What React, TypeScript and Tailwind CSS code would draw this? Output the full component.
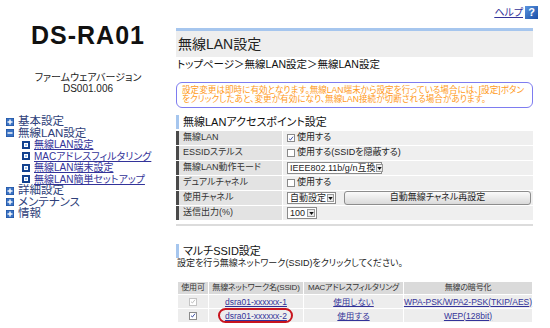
import * as React from 'react';

const ff = "[font-family:'Liberation_Sans','Noto_Sans_CJK_JP',sans-serif] [font-feature-settings:'palt']";

function cx(...c: (string | false | undefined)[]) {
  return c.filter(Boolean).join(' ');
}

function TreeIcon({ minus = false }: { minus?: boolean }) {
  return (
    <svg viewBox="0 0 8 8" className="h-[8px] w-[8px] shrink-0">
      <rect x="0" y="0" width="8" height="8" fill="#1d4f9c" />
      <rect x="0.5" y="0.5" width="7" height="7" fill="#3a72c4" />
      <rect x="1.5" y="3.3" width="5" height="1.4" fill="#fff" />
      {!minus && <rect x="3.3" y="1.5" width="1.4" height="5" fill="#fff" />}
    </svg>
  );
}

function PageIcon() {
  return (
    <svg viewBox="0 0 8 8" className="h-[8px] w-[8px] shrink-0">
      <rect x="0" y="0" width="8" height="8" fill="#12418e" />
      <rect x="2" y="2" width="4" height="4" fill="#fff" />
      <rect x="3" y="3" width="2" height="2" fill="#9cc2ee" />
    </svg>
  );
}

function Check({ on = false, dim = false }: { on?: boolean; dim?: boolean }) {
  return (
    <span
      className={cx(
        'inline-flex h-[8px] w-[8px] shrink-0 items-center justify-center border bg-white',
        dim ? 'border-[#c4c4c4]' : 'border-[#8a8a8a]'
      )}
    >
      {on && (
        <svg viewBox="0 0 8 8" className="h-[7px] w-[7px]">
          <path d="M1.3 4.2 L3.2 6 L6.7 1.6" fill="none" stroke={dim ? '#b8b8b8' : '#2a3f9a'} strokeWidth="1.2" />
        </svg>
      )}
    </span>
  );
}

function Select({ label, w }: { label: string; w: string }) {
  return (
    <span className={cx('inline-flex h-[12px] items-center justify-between border border-[#8c8c8c] bg-white pl-[2px]', w)}>
      <span className="whitespace-nowrap text-[9px] leading-[10px] text-[#222]">{label}</span>
      <span className="m-[1px] inline-flex h-[8px] w-[8px] items-center justify-center border border-[#9a9a9a] bg-[#ececec]">
        <svg viewBox="0 0 6 4" className="h-[3px] w-[5px]">
          <path d="M0 0 L6 0 L3 4 Z" fill="#111" />
        </svg>
      </span>
    </span>
  );
}

const rows: { label: string; value: React.ReactNode }[] = [
  {
    label: '無線LAN',
    value: (
      <span className="flex items-center gap-[2px]">
        <Check on />
        <span>使用する</span>
      </span>
    ),
  },
  {
    label: 'ESSIDステルス',
    value: (
      <span className="flex items-center gap-[2px]">
        <Check />
        <span>使用する(SSIDを隠蔽する)</span>
      </span>
    ),
  },
  { label: '無線LAN動作モード', value: <Select label="IEEE802.11b/g/n互換" w="w-[95px]" /> },
  {
    label: 'デュアルチャネル',
    value: (
      <span className="flex items-center gap-[2px]">
        <Check />
        <span>使用する</span>
      </span>
    ),
  },
  {
    label: '使用チャネル',
    value: (
      <span className="flex items-center gap-[8px]">
        <Select label="自動設定" w="w-[49px]" />
        <span className="flex h-[14px] w-[187px] items-center justify-center rounded-[3px] border border-[#8d8d8d] bg-gradient-to-b from-[#fbfbfb] to-[#dadada] text-[9px] text-[#222]">
          自動無線チャネル再設定
        </span>
      </span>
    ),
  },
  { label: '送信出力(%)', value: <Select label="100" w="w-[30px]" /> },
];

const menu = [
  { label: '基本設定', sub: false, minus: false },
  { label: '無線LAN設定', sub: false, minus: true },
  { label: '無線LAN設定', sub: true },
  { label: 'MACアドレスフィルタリング', sub: true },
  { label: '無線LAN端末設定', sub: true },
  { label: '無線LAN簡単セットアップ', sub: true },
  { label: '詳細設定', sub: false, minus: false },
  { label: 'メンテナンス', sub: false, minus: false },
  { label: '情報', sub: false, minus: false },
];

export default function App() {
  return (
    <div className={cx('flex h-[328px] w-[550px] overflow-hidden bg-white text-[#333]', ff)}>
      {/* Left: model + tree menu */}
      <div className="flex w-[176px] shrink-0 flex-col">
        <div className="pt-[21px] text-center text-[25px] font-bold leading-[28px] tracking-[1px] text-[#111] [font-family:'Liberation_Sans',sans-serif]">
          DS-RA01
        </div>
        <div className="mt-[23px] text-center text-[10px] leading-[11px] text-[#222]">
          <div>ファームウェアバージョン</div>
          <div>DS001.006</div>
        </div>
        <div className="mt-[22px] flex flex-col pl-[6px]">
          {menu.map((m, i) =>
            m.sub ? (
              <div key={i} className="flex h-[11.5px] items-center gap-[4px] pl-[16px]">
                <PageIcon />
                <span className="whitespace-nowrap text-[10px] leading-[11px] text-[#333399] underline">{m.label}</span>
              </div>
            ) : (
              <div key={i} className="flex h-[11.5px] items-center gap-[4px]">
                <TreeIcon minus={m.minus} />
                <span className="whitespace-nowrap text-[11.5px] leading-[11.5px] text-[#2f3f7a]">{m.label}</span>
              </div>
            )
          )}
        </div>
      </div>

      {/* Main */}
      <div className="flex w-[357px] shrink-0 flex-col">
        <div className="-mr-[5px] flex h-[19px] items-end justify-end gap-[2px] pt-[6px]">
          <span className="text-[10px] leading-[12px] text-[#333399] underline">ヘルプ</span>
          <span className="flex h-[13px] w-[13px] items-center justify-center bg-gradient-to-br from-[#5a95e0] to-[#1b4ea6] text-[11px] font-bold leading-none text-white [font-family:'Liberation_Sans',sans-serif]">
            ?
          </span>
        </div>

        <div className="mt-[9px] h-[3px] bg-[#a6c6ee]" />
        <div className="flex h-[26px] items-center bg-[#eeeeee] pl-[2px] text-[14px] text-[#222]">無線LAN設定</div>
        <div className="h-[14px] pl-[1px] text-[10.5px] leading-[14px] text-[#111]">トップページ＞無線LAN設定＞無線LAN設定</div>

        <div className="mt-[11px] whitespace-nowrap rounded-[6px] border border-[#7e7cf0] px-[5px] py-[3px] text-[8.6px] leading-[9px] text-[#ff9a1a]">
          設定変更は即時に有効となります。無線LAN端末から設定を行っている場合には、[設定]ボタン
          <br />
          をクリックしたあと、変更が有効になり、無線LAN接続が切断される場合があります。
        </div>

        <div className="mt-[7px] flex h-[14px] items-center border-l-[3px] border-[#a6c6ee] pl-[4px] text-[11px] text-[#111]">
          無線LANアクセスポイント設定
        </div>

        <div className="mt-[2px] flex flex-col gap-[1px]">
          {rows.map((r) => (
            <div key={r.label} className="flex h-[14px] gap-[1px] text-[9px]">
              <div className="flex w-[106px] items-center border-l-[3px] border-[#4a4a4a] bg-[#e3e3e3] pl-[4px] text-[#333]">
                {r.label}
              </div>
              <div className="flex flex-1 items-center bg-[#efefef] pl-[4px] text-[#222]">{r.value}</div>
            </div>
          ))}
        </div>

        <div className="mt-[4px] h-[2px] bg-[#dcdcdc]" />

        <div className="mt-[18px] flex h-[14px] items-center border-l-[3px] border-[#a6c6ee] pl-[4px] text-[11px] text-[#111]">
          マルチSSID設定
        </div>
        <div className="h-[10px] pl-[1px] text-[9px] leading-[10px] text-[#222]">
          設定を行う無線ネットワーク(SSID)をクリックしてください。
        </div>

        <div className="ml-[2px] mt-[14px] grid grid-cols-[30px_94px_99px_128px] gap-[1px] text-[8.5px] leading-[10px]">
          {['使用可', '無線ネットワーク名(SSID)', 'MACアドレスフィルタリング', '無線の暗号化'].map((h) => (
            <div key={h} className="flex h-[12px] items-center justify-center overflow-hidden whitespace-nowrap bg-[#dadada] text-[8px] tracking-[-0.2px] text-[#333]">
              {h}
            </div>
          ))}

          <div className="flex h-[13px] items-center justify-center bg-[#ededed]">
            <Check on dim />
          </div>
          <div className="flex h-[13px] items-center justify-center bg-[#ededed]">
            <span className="text-[#333399] underline">dsra01-xxxxxx-1</span>
          </div>
          <div className="flex h-[13px] items-center justify-center bg-[#ededed]">
            <span className="text-[#333399] underline">使用しない</span>
          </div>
          <div className="flex h-[13px] items-center justify-center whitespace-nowrap bg-[#ededed]">
            <span className="text-[#333399] underline">WPA-PSK/WPA2-PSK(TKIP/AES)</span>
          </div>

          <div className="flex h-[13px] items-center justify-center bg-[#ededed]">
            <Check on />
          </div>
          <div className="relative flex h-[13px] items-center justify-center bg-[#ededed]">
            <span className="text-[#333399] underline">dsra01-xxxxxx-2</span>
            <span className="absolute left-[9px] top-[-1px] h-[15px] w-[75px] rounded-full border-2 border-[#c8141e]" />
          </div>
          <div className="flex h-[13px] items-center justify-center bg-[#ededed]">
            <span className="text-[#333399] underline">使用する</span>
          </div>
          <div className="flex h-[13px] items-center justify-center bg-[#ededed]">
            <span className="text-[#333399] underline">WEP(128bit)</span>
          </div>
        </div>
      </div>
    </div>
  );
}
